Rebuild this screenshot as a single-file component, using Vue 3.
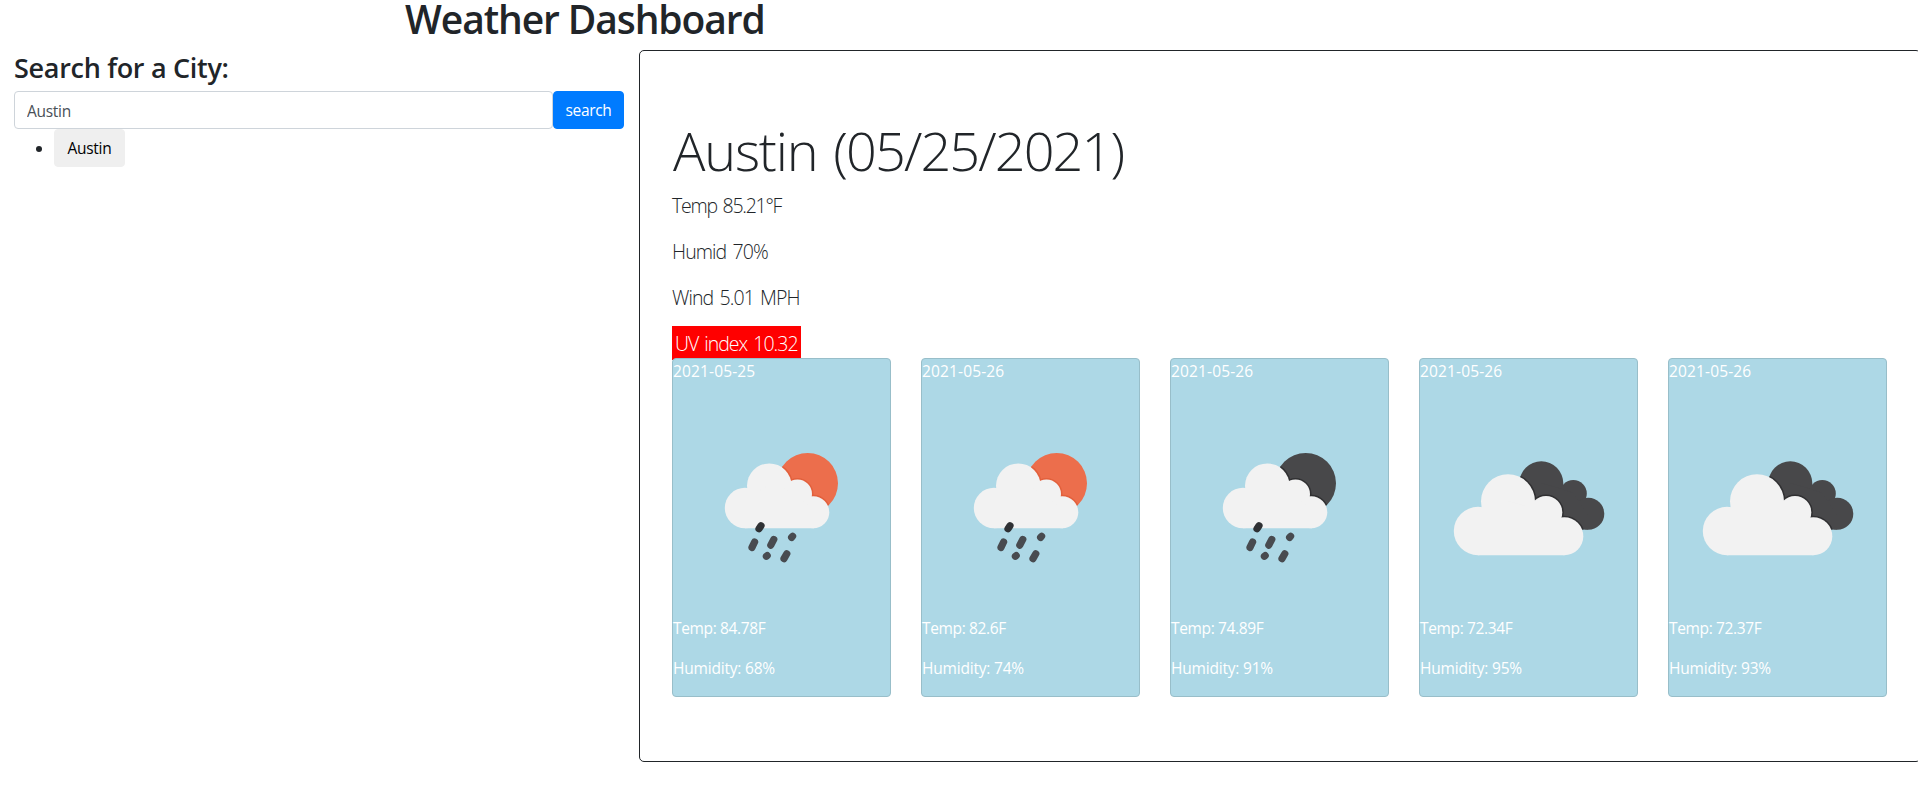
<script setup>
import { ref } from 'vue'

const query = ref('Austin')
const history = ref(['Austin'])

const readings = [
  { text: 'Temp 85.21°F', tight: true },
  { text: 'Humid 70%' },
  { text: 'Wind 5.01 MPH' },
]

const forecast = [
  { date: '2021-05-25', icon: 'rain', tone: 'day', temp: '84.78', humidity: 68 },
  { date: '2021-05-26', icon: 'rain', tone: 'day', temp: '82.6', humidity: 74 },
  { date: '2021-05-26', icon: 'rain', tone: 'night', temp: '74.89', humidity: 91 },
  { date: '2021-05-26', icon: 'clouds', tone: 'night', temp: '72.34', humidity: 95 },
  { date: '2021-05-26', icon: 'clouds', tone: 'night', temp: '72.37', humidity: 93 },
]
</script>

<template>
  <div class="page">
    <header class="header">
      <h1 class="title">Weather Dashboard</h1>
    </header>
    <div class="row">
      <aside class="sidebar">
        <h3 class="prompt">Search for a City:</h3>
        <div class="search">
          <input v-model="query" class="field" type="text" />
          <button class="btn primary">search</button>
        </div>
        <ul class="history">
          <li v-for="city in history" :key="city"><button class="btn plain">{{ city }}</button></li>
        </ul>
      </aside>
      <main class="panel">
        <h1 class="city">Austin <span class="today">(05/25/2021)</span></h1>
        <p v-for="line in readings" :key="line.text" class="lead" :class="{ tight: line.tight }">{{ line.text }}</p>
        <p class="lead last"><span class="uv">UV index 10.32</span></p>
        <div class="cards">
          <article v-for="(day, i) in forecast" :key="i" class="card">
            <p class="date">{{ day.date }}</p>
            <svg v-if="day.icon === 'rain'" class="icon" :class="day.tone" viewBox="0 0 217 217">
              <defs>
                <clipPath :id="'disc' + i"><circle cx="134.7" cy="84.3" r="30.3" /></clipPath>
              </defs>
              <circle class="back" cx="134.7" cy="84.3" r="30.3" />
              <g class="edge" :clip-path="`url(#disc${i})`">
                <circle cx="96.3" cy="86.7" r="22.3" />
                <circle cx="124.5" cy="95" r="14.5" />
                <circle cx="140.3" cy="113.3" r="16" />
              </g>
              <g class="cloud">
                <circle cx="72" cy="109" r="20.2" />
                <circle cx="96.3" cy="86.7" r="22.3" />
                <circle cx="124.5" cy="95" r="14.5" />
                <circle cx="140.3" cy="113.3" r="16" />
                <path d="M72 129.3V100L96 86L124 95L141 113V129.3Z" />
              </g>
              <g class="drops">
                <path class="near" d="M86 129.8L88 126.8" />
                <path d="M79 148.4L81.6 143M97.8 146.2L100.8 140.4M118.6 138.4L119.6 137.2M93.4 157.3L94.2 156.6M111 159.6L113.8 154.8" />
              </g>
            </svg>
            <svg v-else class="icon" :class="day.tone" viewBox="0 0 217 217">
              <defs>
                <clipPath :id="'rear' + i">
                  <circle cx="121.3" cy="84.3" r="22" />
                  <circle cx="153.3" cy="94.5" r="13.5" />
                  <circle cx="168.3" cy="114.7" r="16" />
                  <path d="M121 84L142 90L153 94L166 116V130.6H121Z" />
                </clipPath>
              </defs>
              <g class="back">
                <circle cx="121.3" cy="84.3" r="22" />
                <circle cx="153.3" cy="94.5" r="13.5" />
                <circle cx="168.3" cy="114.7" r="16" />
                <path d="M121 84L142 90L153 94L168 116V130.6H121Z" />
              </g>
              <g class="edge" :clip-path="`url(#rear${i})`">
                <circle cx="88" cy="102.3" r="27" />
                <circle cx="126" cy="113.3" r="16.3" />
                <circle cx="144.3" cy="137.3" r="19" />
              </g>
              <g class="cloud">
                <circle cx="58" cy="132" r="24.2" />
                <circle cx="88" cy="102.3" r="27" />
                <circle cx="126" cy="113.3" r="16.3" />
                <circle cx="144.3" cy="137.3" r="19" />
                <path d="M58 156.2V120L88 102L126 113L144.3 137V156.2Z" />
              </g>
            </svg>
            <p class="temp">Temp: {{ day.temp }}F</p>
            <p>Humidity: {{ day.humidity }}%</p>
          </article>
        </div>
      </main>
    </div>
  </div>
</template>

<style>
body {
  background: #fff;
  overflow: hidden;
}
</style>

<style scoped>
.page {
  font-family: "Open Sans", "Noto Sans", sans-serif;
  font-size: 15.5px;
  line-height: 24px;
  color: #212529;
  height: 802px;
  overflow: hidden;
}
.page * {
  box-sizing: border-box;
}
h1, h3, p, ul {
  margin: 0;
}
.header {
  height: 50px;
  padding-left: 405px;
}
.title {
  font-size: 39px;
  font-weight: 600;
  line-height: 38px;
  letter-spacing: -1.1px;
  white-space: nowrap;
}
.row {
  display: flex;
  width: 1919px;
}
.sidebar {
  flex: none;
  width: 639px;
  padding: 0 15px 0 14px;
}
.prompt {
  height: 41px;
  font-size: 27px;
  font-weight: 600;
  line-height: 36px;
  letter-spacing: -0.3px;
  white-space: nowrap;
}
.search {
  display: flex;
}
.field {
  flex: 1;
  min-width: 0;
  height: 38px;
  padding: 8px 12px 6px;
  border: 1px solid #ced4da;
  border-radius: 4px;
  font: inherit;
  letter-spacing: -0.3px;
  color: #495057;
  background: #fff;
  outline: none;
}
.btn {
  height: 38px;
  padding: 6px 0;
  width: 71px;
  border: 1px solid transparent;
  border-radius: 4px;
  font: inherit;
  letter-spacing: -0.3px;
  display: block;
}
.primary {
  color: #fff;
  background: #007bff;
  border-color: #007bff;
}
.plain {
  color: #000;
  background: #efefef;
  border-color: #efefef;
}
.history {
  padding-left: 40px;
}
.panel {
  flex: 1;
  height: 712px;
  padding: 64px 33px 64px 32px;
  border: 1px solid #212529;
  border-radius: 5px;
}
.city {
  height: 75px;
  padding-left: 1px;
  font-size: 54px;
  font-weight: 300;
  line-height: 70px;
  letter-spacing: -1.2px;
  word-spacing: 3px;
  white-space: nowrap;
}
.today {
  letter-spacing: -1.9px;
}
.lead {
  height: 46px;
  font-size: 19.5px;
  font-weight: 300;
  line-height: 31px;
  letter-spacing: -0.9px;
  word-spacing: 2px;
}
.tight {
  letter-spacing: -1.25px;
}
.last {
  height: 30px;
  letter-spacing: -1px;
}
.uv {
  padding: 4px 3px 3px;
  color: #fff;
  background: #f00;
}
.cards {
  position: relative;
  display: flex;
  gap: 30px;
}
.card {
  flex: 1;
  height: 339px;
  border: 1px solid #98bec9;
  border-radius: 4px;
  background: #add8e6;
  color: #fff;
  letter-spacing: -0.2px;
}
.card p {
  margin-bottom: 16px;
}
.date {
  letter-spacing: 0.15px;
}
.temp {
  letter-spacing: -0.35px;
}
.icon {
  display: block;
  width: 217px;
  height: 217px;
  filter: blur(0.7px);
}
.day {
  --back: #ec6e4c;
  --edge: #e2603c;
}
.night {
  --back: #48484a;
  --edge: #303032;
}
.back {
  fill: var(--back);
}
.edge {
  fill: var(--edge);
  stroke: var(--edge);
  stroke-width: 3;
}
.cloud {
  fill: #f2f2f2;
}
.drops {
  fill: none;
  stroke: #484b50;
  stroke-width: 7.2;
  stroke-linecap: round;
}
.near {
  stroke: #2f3134;
}
</style>
